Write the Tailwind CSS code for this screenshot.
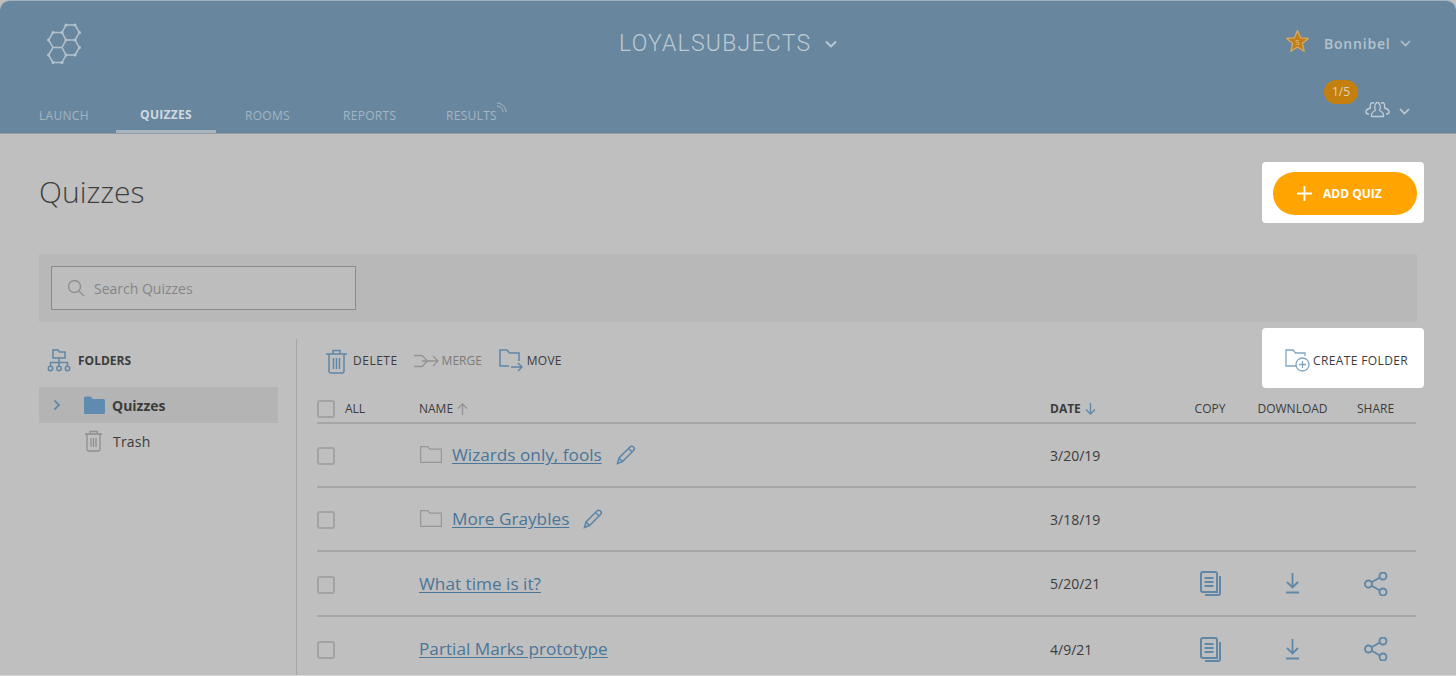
<!DOCTYPE html>
<html lang="en">
<head>
  <meta charset="UTF-8">
  <title>Quizzes</title>
  <script src="https://cdn.jsdelivr.net/npm/@tailwindcss/browser@4"></script>
</head>
<body class="bg-[#d8d8d8] text-[#3c3c3c] font-['Open_Sans',sans-serif] overflow-hidden">
  <div class="h-[675px] w-[1456px] overflow-hidden bg-[#bfbfbf]">

    <!-- header -->
    <header class="h-[134px] bg-[#68879f] border-t border-[#9db1c0] border-b border-b-[#8f9aa3] rounded-t-[10px] flex flex-col">
      <div class="h-[86px] px-[45px] flex justify-between relative">
        <svg class="mt-[21px]" width="36" height="44" viewBox="0 0 36 44" fill="none" stroke="#b4c1cb" stroke-width="1.5">
          <path d="M8 10.500h9l4 7.500-4 7.500H8L3.500 18zM21 3h9l4.500 7.500-4.500 7.500h-9l-4-7.500zM21 18h9l4.500 7.500-4.500 7.500h-9l-4-7.500zM8 25.500h9l4 7.500-4 7.500H8L3.500 33z"/>
          <g fill="#b4c1cb" stroke="none">
            <circle cx="8" cy="10.500" r="1.500"/><circle cx="17" cy="10.500" r="1.500"/><circle cx="21" cy="3" r="1.500"/><circle cx="30" cy="3" r="1.500"/><circle cx="34.500" cy="10.500" r="1.500"/><circle cx="30" cy="18" r="1.500"/><circle cx="21" cy="18" r="1.500"/><circle cx="3.500" cy="18" r="1.500"/><circle cx="34.500" cy="25.500" r="1.500"/><circle cx="30" cy="33" r="1.500"/><circle cx="21" cy="33" r="1.500"/><circle cx="3.500" cy="33" r="1.500"/><circle cx="8" cy="40.500" r="1.500"/><circle cx="17" cy="40.500" r="1.500"/>
          </g>
        </svg>
        <div class="absolute left-[619px] top-[27px] flex items-center gap-[14px] text-[#bccad4]">
          <span class="font-['Roboto',sans-serif] font-light text-[23px] leading-[32px] tracking-[1.25px]">LOYALSUBJECTS</span>
          <svg width="12" height="8" viewBox="0 0 12 8" fill="none" stroke="currentColor" stroke-width="1.800"><path d="M1 1.500l5 5 5-5"/></svg>
        </div>
        <div class="absolute left-[1285px] top-[28px] flex items-center text-[#b4c2cd]">
          <svg width="25" height="25" viewBox="0 0 25 25">
            <path d="M12.500 1.500l3 7.300 7.800.6-6 5 1.900 7.800-6.700-4.200-6.700 4.200 1.900-7.800-6-5 7.800-.6z" fill="#c07f1c" stroke="#d8a95e" stroke-width="1.300" stroke-linejoin="round"/>
            <text x="12.500" y="16" text-anchor="middle" font-size="8" fill="#e2c48f" font-family="Open Sans">S</text>
          </svg>
          <span class="ml-[14px] mt-[3px] text-[14px] font-semibold tracking-[0.8px]">Bonnibel</span>
          <svg class="ml-[9px] mt-[4px]" width="11" height="7" viewBox="0 0 11 7" fill="none" stroke="currentColor" stroke-width="1.600"><path d="M1 1l4.500 4.500L10 1"/></svg>
        </div>
      </div>
      <div class="flex-1 flex items-end relative text-[12px] tracking-[0.3px] text-[#a3b5c3]">
        <a class="w-[116px] pl-[39px] h-[46px] flex items-center pt-[12px]">LAUNCH</a>
        <a class="w-[100px] h-[46px] flex items-center justify-center pt-[12px] font-bold text-[#d0d9df] border-b-[3px] border-[#a9b5be]">QUIZZES</a>
        <a class="ml-[29px] w-[98px] h-[46px] flex items-center pt-[12px]">ROOMS</a>
        <a class="w-[103px] h-[46px] flex items-center pt-[12px]">REPORTS</a>
        <a class="h-[46px] flex items-center pt-[12px]">RESULTS</a>
        <svg class="mb-[20px] -ml-px" width="11" height="11" viewBox="0 0 11 11" fill="none" stroke="#a9bac7" stroke-width="1"><path d="M1 1c4.500 0 9 4 9 9M1 4c3 0 6 2.500 6 6"/></svg>
        <div class="absolute left-[1324px] top-[-7px] w-[34px] h-[24px] rounded-full bg-[#c47f0f] text-[#e0d3b8] text-[12px] tracking-normal flex items-center justify-center">1/5</div>
        <div class="absolute left-[1365px] top-[13px] flex items-center text-[#c0ccd5]">
          <svg width="25" height="18" viewBox="0 0 25 18" fill="none" stroke="currentColor" stroke-width="1.300" stroke-linejoin="round">
            <path d="M6.500 16.500c-.5-3 1.500-5 4-6-2-3 0-8 2-8s4 5 2 8c2.500 1 4.500 3 4 6z"/>
            <path d="M9 3.500C7 1.500 4.500 3.500 5.500 8 3 8.700.5 10 1 12.500c.2 1 1.500 1.500 3 1.500M16 3.500c2-2 4.500 0 3.500 4.500 2.500.7 5 2 4.500 4.500-.2 1-1.500 1.500-3 1.500"/>
          </svg>
          <svg class="ml-[9px] mt-[4px]" width="11" height="7" viewBox="0 0 11 7" fill="none" stroke="currentColor" stroke-width="1.600"><path d="M1 1l4.500 4.500L10 1"/></svg>
        </div>
      </div>
    </header>

    <main class="px-[39px]">
      <!-- title -->
      <div class="flex justify-between items-start pt-[28px]">
        <h1 class="mt-[10px] text-[30px] leading-[40px] font-light text-[#3f3f3f]">Quizzes</h1>
        <div class="-mr-[7px] w-[162px] h-[61px] bg-white rounded-[4px] pl-[11px] pt-[10px]">
          <button class="w-[144px] h-[43px] rounded-full bg-[#ffa400] text-white text-[12px] font-bold flex items-center pl-[24px] gap-[11px]">
            <svg width="15" height="15" viewBox="0 0 15 15" stroke="currentColor" stroke-width="1.800"><path d="M7.500 0v15M0 7.500h15"/></svg>
            ADD QUIZ
          </button>
        </div>
      </div>

      <!-- search -->
      <div class="mt-[31px] h-[68px] bg-[#b8b8b8] pl-[12px] pt-[12px]">
        <div class="w-[305px] h-[44px] border border-[#8b8b8b] bg-[#bdbdbd] flex items-center pl-[15px] gap-[9px] text-[14px] text-[#858585]">
          <svg width="18" height="18" viewBox="0 0 18 18" fill="none" stroke="#909090" stroke-width="1.400"><circle cx="7.500" cy="7.500" r="6"/><path d="M12 12l5 5"/></svg>
          <span>Search Quizzes</span>
        </div>
      </div>

      <div class="mt-[17px] flex">
        <!-- folders -->
        <aside class="w-[257px] shrink-0">
          <div class="h-[42px] pl-[8px] flex items-center gap-[7px] text-[12px] font-bold text-[#3c3c3c]">
            <svg width="24" height="24" viewBox="0 0 24 24" fill="none" stroke="#5f87a8" stroke-width="1.500">
              <path d="M6 10V2h5l1.500 2H18v6zM12 10v8M3.500 18v-3.500h17V18"/>
              <circle cx="3.500" cy="20.500" r="2.200"/><circle cx="12" cy="20.500" r="2.200"/><circle cx="20.500" cy="20.500" r="2.200"/>
            </svg>
            <span class="mt-[2px]">FOLDERS</span>
          </div>
          <div class="mt-[6px] w-[239px] h-[36px] bg-[#b4b4b4] flex items-center text-[14px] font-bold">
            <svg class="ml-[14px]" width="8" height="12" viewBox="0 0 8 12" fill="none" stroke="#6288a6" stroke-width="1.800"><path d="M1.500 1.500L6 6l-4.500 4.500"/></svg>
            <svg class="ml-[23px]" width="21" height="18" viewBox="0 0 21 18" fill="#5f8bb0"><path d="M0 2a1.500 1.500 0 0 1 1.500-1.500h5L9 3h10.500A1.500 1.500 0 0 1 21 4.500v12a1.500 1.500 0 0 1-1.500 1.500h-18A1.500 1.500 0 0 1 0 16.500z"/></svg>
            <span class="ml-[7px]">Quizzes</span>
          </div>
          <div class="h-[36px] flex items-center text-[14px]">
            <svg class="ml-[45px]" width="19" height="22" viewBox="0 0 19 22" fill="none" stroke="#8f8f8f" stroke-width="1.300">
              <path d="M1 4h17M3 4v15.500A1.500 1.500 0 0 0 4.500 21h10a1.500 1.500 0 0 0 1.500-1.500V4M6 4V1.500h7V4M7 8v9M9.500 8v9M12 8v9"/>
            </svg>
            <span class="ml-[10px] tracking-[0.2px]">Trash</span>
          </div>
        </aside>

        <!-- table -->
        <section class="flex-1 h-[336px] border-l border-[#a5a5a5] pl-[20px] text-[12px]">
          <div class="-mt-[11px] h-[60px] flex items-center">
            <div class="pt-[6px] flex items-center">
              <svg class="ml-[9px]" width="21" height="25" viewBox="0 0 21 25" fill="none" stroke="#5f87a8" stroke-width="1.500">
                <path d="M0 5h21M3 5v17.500A2 2 0 0 0 5 24h11a2 2 0 0 0 2-2V5M7 5V1.500h7V5M7.500 9v11M10.500 9v11M13.500 9v11"/>
              </svg>
              <span class="ml-[6px] tracking-[0.5px]">DELETE</span>
              <svg class="ml-[16px]" width="25" height="14" viewBox="0 0 25 14" fill="none" stroke="#949494" stroke-width="1.300"><path d="M0 1.500h8l5.500 5.500L8 12.500H0M8 7h16M19 2l5 5-5 5"/></svg>
              <span class="ml-[3px] text-[#7c7c7c]">MERGE</span>
              <svg class="ml-[17px]" width="24" height="24" viewBox="0 0 24 24" fill="none" stroke="#5f87a8" stroke-width="1.500"><path d="M10 17H1V1h7l2.500 3H20v8M12 18h11M19 14l4 4-4 4"/></svg>
              <span class="ml-[4px] tracking-[0.2px]">MOVE</span>
            </div>
            <div class="ml-auto -mr-[7px] w-[162px] h-[60px] bg-white rounded-[4px] flex items-center pl-[23px] pt-[6px] text-[#3c3c3c]">
              <svg width="25" height="24" viewBox="0 0 25 24" fill="none" stroke="#7ea6c6" stroke-width="1.300">
                <path d="M11 17H1V1h7l2.500 3H20v3"/><circle cx="17.500" cy="15.500" r="6.500"/><path d="M17.500 12v7M14 15.500h7"/>
              </svg>
              <span class="ml-[3px] whitespace-nowrap tracking-[0.38px]">CREATE FOLDER</span>
            </div>
          </div>

          <div class="mr-[1px] border-b-2 border-[#a6a6a6] h-[36px] pt-[8px] grid grid-cols-[102px_631px_120px_80px_85px_81px] items-center">
            <div class="flex items-center gap-[10px]"><span class="w-[18px] h-[18px] rounded-[3px] border-2 border-[#a3a3a3]"></span>ALL</div>
            <div class="flex items-center gap-[4px]">NAME
              <svg width="11" height="12" viewBox="0 0 11 12" fill="none" stroke="#949494" stroke-width="1.300"><path d="M5.500 12V1M1 5.500L5.500 1 10 5.500"/></svg>
            </div>
            <div class="flex items-center gap-[4px] font-bold">DATE
              <svg width="11" height="12" viewBox="0 0 11 12" fill="none" stroke="#5f87a8" stroke-width="1.300"><path d="M5.500 0v11M1 6.500L5.500 11 10 6.500"/></svg>
            </div>
            <div class="text-center">COPY</div>
            <div class="text-center">DOWNLOAD</div>
            <div class="text-center">SHARE</div>
          </div>

          <div class="mr-[1px] h-[64px] border-b-2 border-[#a6a6a6] grid grid-cols-[102px_631px_120px_80px_85px_81px] items-center">
            <span class="mt-[2px] w-[18px] h-[18px] rounded-[3px] border-2 border-[#a3a3a3]"></span>
            <div class="flex items-center">
              <svg class="ml-px" width="22" height="17" viewBox="0 0 22 17" fill="none" stroke="#979797" stroke-width="1.200"><path d="M.6 16.400V.6h7l2.500 2.500h11.300v13.300z"/></svg>
              <a class="ml-[10px] text-[17.200px] text-[#4a7699] underline underline-offset-2">Wizards only, fools</a>
              <svg class="ml-[14px]" width="20" height="20" viewBox="0 0 20 20" fill="none" stroke="#5f87a8" stroke-width="1.600"><path d="M1.500 18.500l1.500-5.500L14 2c1-1 2.500-1 3.500 0s1 2.500 0 3.500L6.500 16.500zM3 13l4 4M12.500 3.500l4 4"/></svg>
            </div>
            <div class="text-[14px]">3/20/19</div>
          </div>

          <div class="mr-[1px] h-[64px] border-b-2 border-[#a6a6a6] grid grid-cols-[102px_631px_120px_80px_85px_81px] items-center">
            <span class="mt-[2px] w-[18px] h-[18px] rounded-[3px] border-2 border-[#a3a3a3]"></span>
            <div class="flex items-center">
              <svg class="ml-px" width="22" height="17" viewBox="0 0 22 17" fill="none" stroke="#979797" stroke-width="1.200"><path d="M.6 16.400V.6h7l2.500 2.500h11.300v13.300z"/></svg>
              <a class="ml-[10px] text-[17.200px] text-[#4a7699] underline underline-offset-2">More Graybles</a>
              <svg class="ml-[14px]" width="20" height="20" viewBox="0 0 20 20" fill="none" stroke="#5f87a8" stroke-width="1.600"><path d="M1.500 18.500l1.500-5.500L14 2c1-1 2.500-1 3.500 0s1 2.500 0 3.500L6.500 16.500zM3 13l4 4M12.500 3.500l4 4"/></svg>
            </div>
            <div class="text-[14px]">3/18/19</div>
          </div>

          <div class="mr-[1px] h-[65px] border-b-2 border-[#a6a6a6] grid grid-cols-[102px_631px_120px_80px_85px_81px] items-center">
            <span class="mt-[2px] w-[18px] h-[18px] rounded-[3px] border-2 border-[#a3a3a3]"></span>
            <a class="text-[17.200px] text-[#4a7699] underline underline-offset-2">What time is it?</a>
            <div class="text-[14px]">5/20/21</div>
            <svg class="justify-self-center" width="21" height="25" viewBox="0 0 21 25" fill="none" stroke="#5f87a8" stroke-width="2"><path d="M17 21V3a2 2 0 0 0-2-2H3a2 2 0 0 0-2 2v16a2 2 0 0 0 2 2zM20 5v17a2 2 0 0 1-2 2H5M4.500 7h9M4.500 11h9M4.500 15h9"/></svg>
            <svg class="justify-self-center" width="15" height="21" viewBox="0 0 15 21" fill="none" stroke="#5f87a8" stroke-width="1.800"><path d="M7.500 0v14M2 9l5.500 5.500L13 9M1 19.500h13"/></svg>
            <svg class="justify-self-center" width="24" height="24" viewBox="0 0 24 24" fill="none" stroke="#5f87a8" stroke-width="1.900"><circle cx="4.500" cy="12" r="3.500"/><circle cx="19" cy="4" r="3.500"/><circle cx="19" cy="20" r="3.500"/><path d="M8 10l8-4.500M8 14l8 4.500"/></svg>
          </div>

          <div class="mr-[1px] h-[64px] grid grid-cols-[102px_631px_120px_80px_85px_81px] items-center">
            <span class="mt-[2px] w-[18px] h-[18px] rounded-[3px] border-2 border-[#a3a3a3]"></span>
            <a class="text-[17.200px] text-[#4a7699] underline underline-offset-2">Partial Marks prototype</a>
            <div class="text-[14px]">4/9/21</div>
            <svg class="justify-self-center" width="21" height="25" viewBox="0 0 21 25" fill="none" stroke="#5f87a8" stroke-width="2"><path d="M17 21V3a2 2 0 0 0-2-2H3a2 2 0 0 0-2 2v16a2 2 0 0 0 2 2zM20 5v17a2 2 0 0 1-2 2H5M4.500 7h9M4.500 11h9M4.500 15h9"/></svg>
            <svg class="justify-self-center" width="15" height="21" viewBox="0 0 15 21" fill="none" stroke="#5f87a8" stroke-width="1.800"><path d="M7.500 0v14M2 9l5.500 5.500L13 9M1 19.500h13"/></svg>
            <svg class="justify-self-center" width="24" height="24" viewBox="0 0 24 24" fill="none" stroke="#5f87a8" stroke-width="1.900"><circle cx="4.500" cy="12" r="3.500"/><circle cx="19" cy="4" r="3.500"/><circle cx="19" cy="20" r="3.500"/><path d="M8 10l8-4.500M8 14l8 4.500"/></svg>
          </div>
        </section>
      </div>
    </main>
  </div>
</body>
</html>
